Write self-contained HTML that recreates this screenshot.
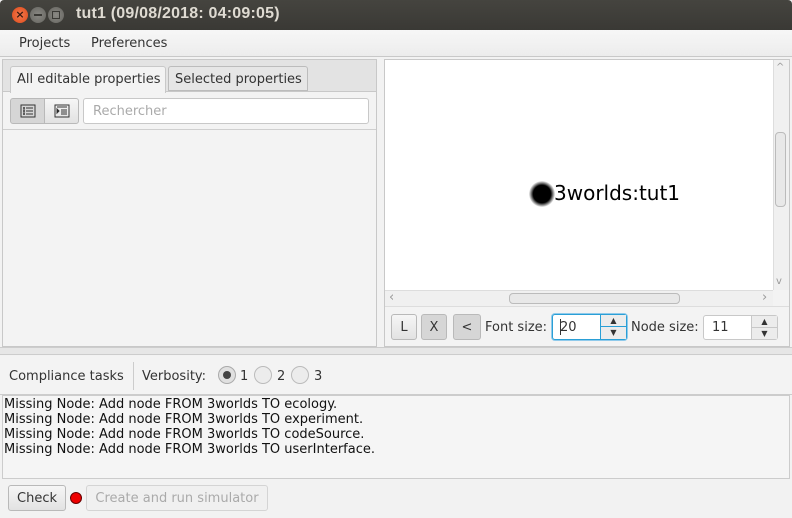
<!DOCTYPE html>
<html><head><meta charset="utf-8"><style>
*{box-sizing:border-box;margin:0;padding:0}
body{width:792px;height:518px;overflow:hidden;background:#f2f2f2;font-family:"DejaVu Sans","Liberation Sans",sans-serif;font-size:13px;color:#333;position:relative}
.a{position:absolute}
.btn{position:absolute;border:1px solid #b9b9b9;border-radius:3px;background:linear-gradient(#f6f6f6,#e2e2e2);text-align:center}
</style></head><body>
<div class="a" style="left:0;top:0;width:792px;height:30px;background:linear-gradient(#45443f,#3a3935);border-radius:4px 4px 0 0"></div>
<div class="a" style="left:12px;top:7px;width:16px;height:16px;border-radius:50%;background:radial-gradient(#f47a4e,#de4a1a);color:#3a1a10;font-size:11px;line-height:16px;text-align:center;font-weight:bold">×</div>
<div class="a" style="left:30px;top:7px;width:16px;height:16px;border-radius:50%;background:radial-gradient(#8a8984,#65645f)"><div class="a" style="left:4px;top:7px;width:8px;height:2px;background:#3a3935"></div></div>
<div class="a" style="left:48px;top:7px;width:16px;height:16px;border-radius:50%;background:radial-gradient(#8a8984,#65645f)"><div class="a" style="left:4px;top:4px;width:8px;height:8px;border:1.5px solid #3a3935"></div></div>
<div class="a" style="left:76px;top:5px;color:#dfdbd2;font-size:16px;font-weight:bold;font-family:'Liberation Sans',sans-serif;letter-spacing:0.2px">tut1 (09/08/2018: 04:09:05)</div>
<div class="a" style="left:0;top:30px;width:792px;height:27px;background:linear-gradient(#f7f7f7,#ececec);border-bottom:1px solid #c8c8c8"></div>
<div class="a" style="left:19px;top:36px">Projects</div>
<div class="a" style="left:91px;top:36px">Preferences</div>
<div class="a" style="left:2px;top:59px;width:375px;height:288px;border:1px solid #c8c8c8;background:#f3f3f3"></div>
<div class="a" style="left:3px;top:60px;width:373px;height:32px;background:#e3e3e3;border-bottom:1px solid #c8c8c8"></div>
<div class="a" style="left:10px;top:66px;width:156px;height:27px;background:#f3f3f3;border:1px solid #c8c8c8;border-bottom:none;border-radius:3px 3px 0 0;padding:5px 0 0 6px">All editable properties</div>
<div class="a" style="left:168px;top:66px;width:140px;height:25px;background:#e6e6e6;border:1px solid #bcbcbc;border-radius:3px 3px 0 0;padding:5px 0 0 6px">Selected properties</div>
<div class="a" style="left:3px;top:93px;width:373px;height:37px;border-bottom:1px solid #cfcfcf"></div>
<div class="btn" style="left:10px;top:98px;width:35px;height:26px;background:#d6d6d6;border-radius:3px 0 0 3px"><svg width="16" height="14" style="margin-top:5px" viewBox="0 0 16 14"><rect x="1" y="1" width="14" height="12" fill="none" stroke="#333"/><path d="M4 3v8M6 4h7M6 7h7M6 10h7M3 4h2M3 7h2M3 10h2" stroke="#333"/></svg></div>
<div class="btn" style="left:44px;top:98px;width:35px;height:26px;border-radius:0 3px 3px 0"><svg width="16" height="14" style="margin-top:5px" viewBox="0 0 16 14"><rect x="1" y="1" width="14" height="12" fill="none" stroke="#333"/><path d="M3 3h10M7 6h6M7 8h6M7 10h6M3 5l2 2-2 2z" stroke="#333"/></svg></div>
<div class="a" style="left:83px;top:98px;width:286px;height:26px;background:#fff;border:1px solid #c8c8c8;border-radius:3px;color:#aaa;padding:5px 0 0 9px">Rechercher</div>
<div class="a" style="left:384px;top:59px;width:406px;height:288px;border:1px solid #c8c8c8;background:#f3f3f3"></div>
<div class="a" style="left:385px;top:60px;width:388px;height:230px;background:#fff"></div>
<div class="a" style="left:773px;top:60px;width:16px;height:230px;background:#f0f0f0;border-left:1px solid #ddd"></div>
<div class="a" style="left:776px;top:62px;color:#999;font-size:10px">^</div>
<div class="a" style="left:775px;top:132px;width:11px;height:75px;border:1px solid #bbb;border-radius:4px;background:#e8e8e8"></div>
<div class="a" style="left:776px;top:276px;color:#999;font-size:10px">v</div>
<div class="a" style="left:385px;top:290px;width:388px;height:16px;background:#f0f0f0;border-top:1px solid #ddd"></div>
<div class="a" style="left:389px;top:290px;color:#999;font-size:13px">‹</div>
<div class="a" style="left:762px;top:290px;color:#999;font-size:13px">›</div>
<div class="a" style="left:509px;top:293px;width:171px;height:11px;border:1px solid #bbb;border-radius:4px;background:#e8e8e8"></div>
<div class="a" style="left:529px;top:181px;width:26px;height:26px;border-radius:50%;background:radial-gradient(#000 48%,rgba(0,0,0,.4) 62%,rgba(0,0,0,0) 72%)"></div>
<div class="a" style="left:554px;top:181px;font-size:20px;color:#000">3worlds:tut1</div>
<div class="a" style="left:385px;top:306px;width:404px;height:40px;border-top:1px solid #ddd"></div>
<div class="btn" style="left:391px;top:314px;width:26px;height:26px;line-height:26px">L</div>
<div class="btn" style="left:421px;top:314px;width:26px;height:26px;line-height:26px;background:#d6d6d6">X</div>
<div class="btn" style="left:453px;top:314px;width:28px;height:26px;line-height:26px;background:#d6d6d6">&lt;</div>
<div class="a" style="left:485px;top:320px">Font size:</div>
<div class="a" style="left:552px;top:314px;width:75px;height:26px;border:1px solid #2a9fd6;border-radius:3px;background:#fff;box-shadow:0 0 0 1px #8fcaeb"></div>
<div class="a" style="left:560px;top:320px">20</div>
<div class="a" style="left:560px;top:319px;width:1px;height:16px;background:#333"></div>
<div class="a" style="left:600px;top:315px;width:26px;height:24px;background:#ececec;border-left:1px solid #2a9fd6"><div style="height:12px;border-bottom:1px solid #2a9fd6;font-size:8px;text-align:center;line-height:12px">▲</div><div style="font-size:8px;text-align:center;line-height:11px">▼</div></div>
<div class="a" style="left:631px;top:320px">Node size:</div>
<div class="a" style="left:703px;top:315px;width:75px;height:25px;border:1px solid #c8c8c8;border-radius:3px;background:#fff"></div>
<div class="a" style="left:712px;top:320px">11</div>
<div class="a" style="left:751px;top:316px;width:26px;height:23px;background:#ececec;border-left:1px solid #c8c8c8"><div style="height:12px;border-bottom:1px solid #c8c8c8;font-size:8px;text-align:center;line-height:12px">▲</div><div style="font-size:8px;text-align:center;line-height:11px">▼</div></div>
<div class="a" style="left:0;top:347px;width:792px;height:8px;background:#e6e6e6;border-top:1px solid #ccc;border-bottom:1px solid #ccc"></div>
<div class="a" style="left:0;top:356px;width:792px;height:39px;background:#f3f3f3;border-bottom:1px solid #ccc"></div>
<div class="a" style="left:9px;top:369px">Compliance tasks</div>
<div class="a" style="left:133px;top:362px;width:1px;height:28px;background:#ccc"></div>
<div class="a" style="left:142px;top:369px">Verbosity:</div>
<div class="a" style="left:218px;top:366px;width:18px;height:18px;border-radius:50%;border:1px solid #aaa;background:#e0e0e0"><div class="a" style="left:4px;top:4px;width:8px;height:8px;border-radius:50%;background:#444"></div></div>
<div class="a" style="left:240px;top:369px">1</div>
<div class="a" style="left:254px;top:366px;width:18px;height:18px;border-radius:50%;border:1px solid #bbb;background:#ececec"></div>
<div class="a" style="left:277px;top:369px">2</div>
<div class="a" style="left:291px;top:366px;width:18px;height:18px;border-radius:50%;border:1px solid #bbb;background:#ececec"></div>
<div class="a" style="left:314px;top:369px">3</div>
<div class="a" style="left:2px;top:395px;width:788px;height:84px;background:#f5f5f5;border:1px solid #ccc;color:#111;padding:1px 0 0 1px;line-height:15px;font-size:13px">Missing Node: Add node FROM 3worlds TO ecology.<br>Missing Node: Add node FROM 3worlds TO experiment.<br>Missing Node: Add node FROM 3worlds TO codeSource.<br>Missing Node: Add node FROM 3worlds TO userInterface.</div>
<div class="btn" style="left:8px;top:485px;width:58px;height:26px;line-height:26px">Check</div>
<div class="a" style="left:70px;top:492px;width:12px;height:12px;border-radius:50%;background:#e00;border:1px solid #600"></div>
<div class="btn" style="left:86px;top:485px;width:182px;height:26px;line-height:26px;color:#aaa;border-color:#d4d4d4;background:#f0f0f0">Create and run simulator</div>
</body></html>
